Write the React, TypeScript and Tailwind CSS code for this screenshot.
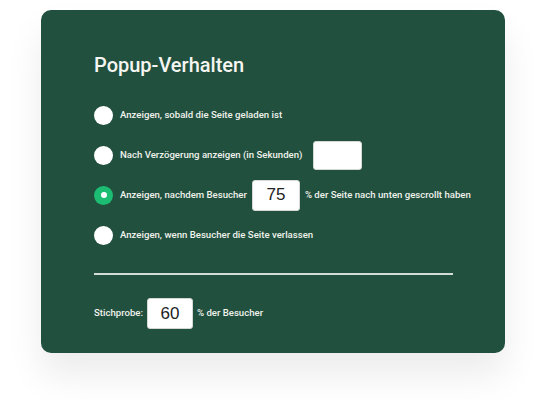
function Radio({ checked = false }: { checked?: boolean }) {
  if (checked) {
    return (
      <span className="flex h-[19px] w-[19px] shrink-0 items-center justify-center rounded-full bg-[#1cbd72]">
        <span className="h-[6px] w-[6px] rounded-full bg-white" />
      </span>
    );
  }
  return <span className="h-[19px] w-[19px] shrink-0 rounded-full bg-white" />;
}

function NumberBox({ value, className }: { value?: string; className: string }) {
  return (
    <span
      className={`flex shrink-0 items-center justify-center rounded-[3px] border border-[#d5d9d4] bg-white text-[17px] font-normal text-[#222] [font-family:'Liberation_Sans',Arial,sans-serif] ${className}`}
    >
      {value}
    </span>
  );
}

export default function App() {
  return (
    <div className="min-h-[400px] bg-white pt-[10px] [font-family:Roboto,'Liberation_Sans',sans-serif]">
      <div className="ml-[41px] w-[464px] rounded-[10px] bg-[#22503f] pl-[53px] pr-[30px] pt-[43px] pb-[24px] shadow-[0_22px_36px_rgba(0,0,0,0.08)]">
        <h1 className="text-[20px] font-medium leading-[24px] text-[#f5f6f1]">Popup-Verhalten</h1>

        <div className="mt-[23px] flex flex-col gap-[10px] whitespace-nowrap text-[9.6px] font-medium text-[#f0f2ec]">
          <div className="flex h-[30px] items-center gap-[7px]">
            <Radio />
            <span>Anzeigen, sobald die Seite geladen ist</span>
          </div>
          <div className="flex h-[30px] items-center gap-[7px]">
            <Radio />
            <span>Nach Verzögerung anzeigen (in Sekunden)</span>
            <NumberBox className="ml-[4px] h-[29px] w-[49px]" />
          </div>
          <div className="flex h-[30px] items-center gap-[7px]">
            <Radio checked />
            <span>Anzeigen, nachdem Besucher</span>
            <NumberBox value="75" className="-ml-[2px] h-[31px] w-[48px]" />
            <span className="-ml-[2px]">% der Seite nach unten gescrollt haben</span>
          </div>
          <div className="flex h-[30px] items-center gap-[7px]">
            <Radio />
            <span>Anzeigen, wenn Besucher die Seite verlassen</span>
          </div>
        </div>

        <div className="mt-[23px] h-[2px] w-[359px] bg-[#d3ddd5]" />

        <div className="mt-[23px] flex items-center gap-[4px] whitespace-nowrap text-[9.6px] font-medium text-[#f0f2ec]">
          <span>Stichprobe:</span>
          <NumberBox value="60" className="h-[31px] w-[46px]" />
          <span>% der Besucher</span>
        </div>
      </div>
    </div>
  );
}
